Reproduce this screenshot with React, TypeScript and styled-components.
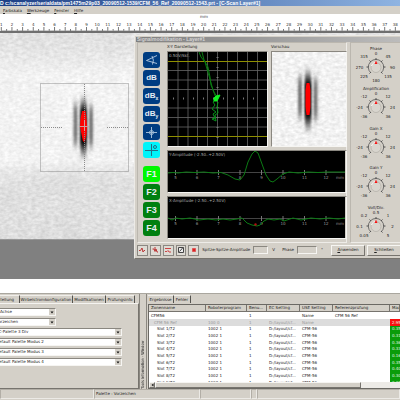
import React, { useEffect, useState } from "react";
import styled, { createGlobalStyle, css } from "styled-components";

const GlobalStyle = createGlobalStyle`
  *, *::before, *::after { box-sizing: border-box; }
  body { margin: 0; background: #d4d0c8; }
  body, button, input, select, table { font-family: "DejaVu Sans", "Noto Sans", sans-serif; font-size: 4px; line-height: 6px; color: #222; }
  button, input, select { margin: 0; padding: 0; border-radius: 0; }
  svg { display: block; }
`;

const sunken = css`
  border: 1px solid;
  border-color: #8a8780 #f6f5f2 #f6f5f2 #8a8780;
`;
const raised = css`
  border: 1px solid;
  border-color: #f6f5f2 #77746e #77746e #f6f5f2;
`;

const Page = styled.div`
  display: flex;
  flex-direction: column;
  min-height: 100vh;
  overflow: hidden;
  background: #d4d0c8;
`;
const TitleBar = styled.header`
  height: 6px;
  overflow: hidden;
  white-space: nowrap;
  color: #fff;
  font: bold 5px/6px "Liberation Sans", sans-serif;
  background: linear-gradient(90deg, #1c3f86, #8fb4e2);
`;
const MenuBar = styled.nav`
  display: flex;
  gap: 5px;
  height: 8px;
  padding: 1px 3px 0;
`;
const MenuItem = styled.button`
  border: 0;
  background: none;
  white-space: nowrap;
  &::first-letter { text-decoration: underline; }
`;
const RulerBar = styled.div`
  height: 19px;
  overflow: hidden;
  background: #fff;
  border-bottom: 2px solid #6f6f6f;
`;
const Workspace = styled.main`
  position: relative;
  flex: 1;
  min-height: 246px;
  overflow: hidden;
  background: #808080;
`;
const Dialog = styled.section`
  position: absolute;
  top: 2px;
  left: 134px;
  width: 270px;
  padding: 1px;
  background: #d4d0c8;
  border: 1px solid;
  border-color: #eceae6 #77746e #77746e #eceae6;
`;
const DialogTitle = styled.div`
  height: 5px;
  padding-left: 1px;
  overflow: hidden;
  font: bold 5px/5px "Liberation Sans", sans-serif;
  color: #d4d4d4;
  background: linear-gradient(90deg, #808080, #bcbcbc);
`;
const DialogBody = styled.div`
  display: flex;
  gap: 3px;
  padding: 0 1px;
`;
const Group = styled.div`
  display: flex;
  border: 1px solid;
  border-color: #bbb7af #eeece8 #eeece8 #bbb7af;
`;
const MainGroup = styled(Group)`
  width: 210px;
  padding: 1px 1px 3px 5px;
  gap: 7px;
`;
const KnobGroup = styled(Group)`
  flex: 1;
  flex-direction: column;
  justify-content: space-between;
  padding-top: 3px;
`;
const ToolColumn = styled.div`
  display: flex;
  flex-direction: column;
  gap: 2px;
  padding-top: 8px;
`;
const ToolButton = styled.button<{ $bg: string; $size?: number; $gap?: boolean }>`
  display: flex;
  align-items: center;
  justify-content: center;
  width: 17px;
  height: 16px;
  margin-top: ${(p) => (p.$gap ? 6 : 0)}px;
  border: 0;
  border-radius: 3px;
  background: ${(p) => p.$bg};
  color: #e6eef4;
  font: bold ${(p) => p.$size ?? 8}px/10px "Liberation Sans", sans-serif;
  sub { font-size: 5px; line-height: 5px; padding-top: 5px; }
`;
const Plots = styled.div`
  display: flex;
  flex: 1;
  flex-direction: column;
  gap: 3px;
`;
const PlotRow = styled.div`
  display: grid;
  grid-template-columns: 101px 1fr;
  gap: 3px;
`;
const Caption = styled.div`
  height: 7px;
`;
const Frame = styled.div`
  overflow: hidden;
  ${sunken}
`;
const Footer = styled.form`
  display: flex;
  align-items: center;
  gap: 2px;
  height: 14px;
  padding: 0 1px;
`;
const SmallButton = styled.button`
  display: flex;
  align-items: center;
  justify-content: center;
  width: 11px;
  height: 11px;
  background: #dedbd4;
  border: 1px solid #8b8882;
`;
const Field = styled.label`
  display: flex;
  align-items: center;
  gap: 3px;
  margin-left: 1px;
  white-space: nowrap;
`;
const ValueInput = styled.input<{ $w: number }>`
  width: ${(p) => p.$w}px;
  height: 8px;
  background: #d4d0c8;
  outline: 0;
  ${sunken}
`;
const Unit = styled.span<{ $w: number }>`
  width: ${(p) => p.$w}px;
  padding-left: 2px;
`;
const PushButton = styled.button`
  flex: none;
  width: 34px;
  height: 11px;
  background: #d4d0c8;
  ${raised}
  &::first-letter { text-decoration: underline; }
`;
const KnobBox = styled.div`
  display: flex;
  flex-direction: column;
  align-items: center;
  width: 50px;
  height: 37px;
  line-height: 5px;
`;
const Band = styled.div`
  height: 14px;
  background: #fff;
`;
const Bottom = styled.div`
  display: grid;
  grid-template-columns: 139px 8px minmax(0, 1fr);
  grid-template-rows: minmax(0, 1fr);
  height: 96px;
  border-top: 1px solid #aaa79f;
`;
const SettingsPane = styled.section`
  display: flex;
  flex-direction: column;
  margin-left: -14px;
  padding-top: 1px;
`;
const Tabs = styled.div`
  display: flex;
  height: 8px;
`;
const Tab = styled.button<{ $w: number }>`
  flex: none;
  width: ${(p) => p.$w}px;
  background: #d4d0c8;
  border: 0 solid #55534f;
  border-right-width: 1px;
  border-top: 1px solid #f0eeea;
  white-space: nowrap;
`;
const TabBody = styled.div`
  display: flex;
  flex: 1;
  flex-direction: column;
  align-items: flex-start;
  gap: 2px;
  padding: 4px 5px;
  border: 1px solid;
  border-color: #f4f3f0 #77746e #77746e #f4f3f0;
`;
const SelectBox = styled.label<{ $w: number }>`
  display: grid;
  grid-template-columns: 1fr 6px;
  width: ${(p) => p.$w}px;
  height: 8px;
  background: #fff;
  ${sunken}
`;
const NativeSelect = styled.select`
  width: 100%;
  height: 6px;
  padding-left: 3px;
  appearance: none;
  border: 0;
  background: #fff;
`;
const Arrow = styled.span`
  display: flex;
  align-items: center;
  justify-content: center;
  background: #d4d0c8;
`;
const Strip = styled.div`
  display: flex;
  justify-content: center;
  border-left: 1px solid #8a8780;
  border-right: 1px solid #8a8780;
`;
const StripText = styled.span`
  writing-mode: vertical-rl;
  transform: rotate(180deg);
  white-space: nowrap;
  font-family: "DejaVu Sans Condensed", "Noto Sans", sans-serif;
`;
const ResultsPane = styled.section`
  display: flex;
  flex-direction: column;
  padding: 1px 0 0 1px;
`;
const TableFrame = styled.div`
  display: flex;
  flex: 1;
  flex-direction: column;
  min-height: 0;
  margin-top: 1px;
  background: #fff;
  border: 1px solid #6b6964;
  border-right: 0;
`;
const TableClip = styled.div`
  flex: 1;
  min-height: 0;
  overflow: hidden;
`;
const Results = styled.table`
  width: 100%;
  table-layout: fixed;
  border-collapse: separate;
  border-spacing: 0;
  white-space: nowrap;
  th { height: 7px; padding: 0 2px; overflow: hidden; text-align: left; font-weight: normal; background: #d4d0c8; border-right: 1px solid #77746e; border-bottom: 1px solid #77746e; }
  td { height: 7px; padding: 0 2px; overflow: hidden; }
  tbody tr:nth-child(3n) td { height: 6px; }
`;
const Row = styled.tr<{ $muted: boolean }>`
  color: ${(p) => (p.$muted ? "#999" : "#222")};
  background: ${(p) => (p.$muted ? "#dcdcdc" : "#fff")};
`;
const Name = styled.span<{ $level: number }>`
  padding-left: ${(p) => p.$level * 3}px;
`;
const Max = styled.td<{ $bad: boolean }>`
  background: ${(p) => (p.$bad ? "#fa1010" : "#0a9c0a")};
  color: #e6f3e0;
`;
const ScrollBar = styled.div`
  display: flex;
  flex: none;
  height: 6px;
  background: #edebe7;
`;
const ScrollArrow = styled.button`
  display: flex;
  align-items: center;
  justify-content: center;
  width: 6px;
  background: #d4d0c8;
  ${raised}
`;
const ScrollThumb = styled.div`
  width: 82%;
  background: #d4d0c8;
  ${raised}
`;
const StatusBar = styled.footer`
  display: grid;
  grid-template-columns: 94px 106px 51px 6px 1fr;
  height: 11px;
  padding-bottom: 1px;
`;
const StatusCell = styled.div`
  padding-left: 1px;
  line-height: 8px;
  white-space: nowrap;
  border: 1px solid;
  border-color: #b2aea6 #eceae6 #eceae6 #b2aea6;
`;

function usePageWidth() {
  const [width, setWidth] = useState(() => document.documentElement.clientWidth);
  useEffect(() => {
    const update = () => setWidth(document.documentElement.clientWidth);
    window.addEventListener("resize", update);
    return () => window.removeEventListener("resize", update);
  }, []);
  return width;
}

function Ruler() {
  const width = usePageWidth();
  const step = 10.65;
  const count = Math.floor((width - 4) / step) + 1;
  const ticks = [];
  for (let n = 1; n <= count; n++) {
    const x = 1.3 + (n - 1) * step;
    ticks.push(
      <g key={n}>
        <text x={x} y={12} textAnchor="middle">{n}</text>
        <path d={`M${x} 13V17M${x + step / 2} 15V17`} stroke="#555" strokeWidth="0.8" />
        {[1, 2, 3, 4, 6, 7, 8, 9].map((k) => (
          <path key={k} d={`M${x + (k * step) / 10} 16V17`} stroke="#888" strokeWidth="0.5" />
        ))}
      </g>
    );
  }
  return (
    <svg width="100%" height="17" fontSize="4" fill="#333">
      <text x="200" y="4">mm</text>
      {ticks}
    </svg>
  );
}

function Grain({ id, w, h, light }: { id: string; w: number; h: number; light?: boolean }) {
  return (
    <>
      <defs>
        <filter id={`${id}f`} x="0" y="0" width="100%" height="100%" colorInterpolationFilters="sRGB">
          <feTurbulence type="fractalNoise" baseFrequency="0.22 0.35" numOctaves="2" seed="4" />
          <feColorMatrix values="0.2 0 0 0 0.84  0.2 0 0 0 0.84  0.2 0 0 0 0.84  0 0 0 0 1" />
        </filter>
        <filter id={`${id}c`} x="0" y="0" width="100%" height="100%">
          <feTurbulence type="fractalNoise" baseFrequency="0.05 0.025" numOctaves="2" seed="9" />
          <feColorMatrix values="0 0 0 0 0.6  0 0 0 0 0.6  0 0 0 0 0.6  1.5 0 0 0 -0.55" />
        </filter>
        <filter id={`${id}b`} x="-100%" y="-30%" width="300%" height="160%">
          <feGaussianBlur stdDeviation="1 5" />
        </filter>
        <filter id={`${id}s`} x="-100%" y="-30%" width="300%" height="160%">
          <feGaussianBlur stdDeviation="1 3" />
        </filter>
        <linearGradient id={`${id}g`} x2="0" y2="1">
          <stop offset="0" stopColor="#999" stopOpacity="0.15" />
          <stop offset="0.2" stopColor="#fff" stopOpacity="0.3" />
          <stop offset="0.62" stopColor="#fff" stopOpacity="0.3" />
          <stop offset="0.75" stopColor="#888" stopOpacity="0.14" />
          <stop offset="1" stopColor="#888" stopOpacity="0.16" />
        </linearGradient>
      </defs>
      <rect width={w} height={h} filter={`url(#${id}f)`} />
      {light ? (
        <rect width={w} height={h} fill="#fff" opacity="0.15" />
      ) : (
        <>
          <rect width={w} height={h} filter={`url(#${id}c)`} opacity="0.3" />
          <rect width={w} height={h} fill={`url(#${id}g)`} />
        </>
      )}
    </>
  );
}

function Echo({ id, x, y, core }: { id: string; x: number; y: number; core: string }) {
  return (
    <g transform={`translate(${x} ${y})`}>
      <g filter={`url(#${id}b)`} fill="#333">
        <rect x="-10" y="-22" width="4" height="40" opacity="0.65" />
        <rect x="5.500" y="-20" width="4" height="40" opacity="0.65" />
        <rect x="-3" y="-26" width="6" height="54" opacity="0.8" />
      </g>
      <rect x="-3" y="-18" width="6" height="37" fill="#000" filter={`url(#${id}s)`} />
      <path d={core} fill="#f00" />
    </g>
  );
}

function ScanImage() {
  return (
    <svg width="400" height="207">
      <Grain id="scan" w={400} h={207} />
      <Echo id="scan" x={83.5} y={93.5} core="M-1.500-15.500H2L3-9 3.500 0 3 8 1.500 15H-0.500L-2 8-3.500 0-3-8Z" />
      <g stroke="#8c8c8c" fill="none" strokeDasharray="1 1">
        <path d="M40.500 50.500H128.500V138.500H40.500ZM84.500 51V138M41 94.500H62M107 94.500H128" />
      </g>
      <path d="M84.500 87V98M79 93.500H89" stroke="#cf9c9c" />
      <path d="M0 206.500H400" stroke="#555" opacity="0.5" />
    </svg>
  );
}

const Black = styled.svg`
  background: #000;
`;

function XYPlot() {
  return (
    <Black width="99" height="94">
      <path d="M10 0V94M20 0V94M29.500 0V94M39.500 0V94M49.500 0V94M59.500 0V94M69.500 0V94M79.500 0V94M89.500 0V94M0 18.500H99M0 28H99M0 37.500H99M0 56H99M0 65.500H99M0 75H99" stroke="#666" strokeWidth="0.8" />
      <path d="M49.500 5V90M5 46.500H95" stroke="#777" strokeDasharray="1 9" strokeWidth="2" />
      <path d="M0 9.500H99M0 84.500H99" stroke="#8f8f00" />
      <path d="M31 0 33 5 37 10 39 17 41 24 43 31 45 38 48 46M34 0 36 8 40 15 42 25 43 33 46 40 49 45" stroke="#087c10" fill="none" />
      <path d="M48 47 45 50 47 53 44 57 48 60 45 62 47 66 44 67 48 69 47 63 50 61 49 55 50 50" stroke="#07931a" fill="none" />
      <path d="M46 46 48 44 52 43 50 47 49 49 46 49Z" fill="#10f020" stroke="#10f020" />
      <text x="1" y="5" fill="#aaa" fontSize="4">0.50V/Skt.</text>
    </Black>
  );
}

function Preview() {
  return (
    <svg width="74" height="94">
      <Grain id="prev" w={74} h={94} light />
      <Echo id="prev" x={36} y={47} core="M-1.500-16H1.500L2.500-9V8L1.500 16H-1.500L-2.500 8V-9Z" />
    </svg>
  );
}

function AmplitudePlot({ label, wave, mark }: { label: string; wave: string; mark?: boolean }) {
  return (
    <Black width="177" height="41" fontSize="4" fill="#999">
      <path d="M0 21.500H177" stroke="#555" strokeWidth="0.8" />
      {[5, 6, 7, 8, 9, 10, 11, 12].map((n, i) => (
        <g key={n}>
          <path d={`M${7.5 + i * 21.5} 19V24`} stroke="#777" />
          <text x={7.5 + i * 21.5} y="27.500" textAnchor="middle">{n}</text>
        </g>
      ))}
      <text x="168" y="27.500">mm</text>
      <path d={wave} fill="none" stroke="#0b7a14" />
      {mark && <circle cx="87.500" cy="27.500" r="1.200" fill="#b01010" />}
      <text x="1" y="5" fill="#aaa">{label}</text>
    </Black>
  );
}

function Knob({ label, marks, bottom }: { label: string; marks: string[]; bottom?: string }) {
  const spots = [[25, 4], [13, 6.5], [37, 6.5], [8.5, 17.5], [41.5, 17.5], [13, 27], [37, 27]];
  return (
    <KnobBox>
      <span>{label}</span>
      <svg width="50" height="32" fontSize="4" fill="#222" textAnchor="middle" role="img" aria-label={label}>
        {marks.map((m, i) => (
          <text key={i} x={spots[i][0]} y={spots[i][1]}>{m}</text>
        ))}
        {bottom && <text x="25" y="31">{bottom}</text>}
        <path d="M25 7V9M34.500 16H32M15.500 16H18M18.500 9.500 20 11M31.500 9.500 30 11M18.500 22.500 20 21M31.500 22.500 30 21" stroke="#555" />
        <path d="M20 22A7.700 7.700 0 1 1 30 22" fill="none" stroke="#555" strokeWidth="0.800" />
        <circle cx="25" cy="16.500" r="5" fill="#d8d5ce" stroke="#b5b1a9" strokeWidth="0.800" />
        <path d="M20.500 15A4.700 4.700 0 0 1 26 11.800" fill="none" stroke="#fff" />
        <path d="M25 9.500 26.500 13H23.500Z" fill="#f21616" />
      </svg>
    </KnobBox>
  );
}

const Down = () => (
  <svg width="4" height="3"><path d="M0.500 0.500H3.500L2 2.500Z" fill="#111" /></svg>
);

function Choice({ w, value }: { w: number; value: string }) {
  return (
    <SelectBox $w={w}>
      <NativeSelect aria-label={value} defaultValue={value}>
        <option>{value}</option>
      </NativeSelect>
      <Arrow><Down /></Arrow>
    </SelectBox>
  );
}

const gain = ["0", "-12", "12", "-24", "24", "-36", "36"];
const maxima = ["0.35", "0.31", "0.36", "0.33", "0.16", "0.35", "0.40", "0.30", "0.31"];
const rows = [
  ["CFM56", "", "1", "", "Name", "CFM 56 Ref", ""],
  ["CFM 56 Ref", "100 0", "1", "D:/layout/cf...", "Name", "", "2.95"],
  ...maxima.map((m, i) => [`Slot ${i + 1}/72`, "1002 1", "1", "D:/layout/cf...", "CFM-56", "", m]),
];

const footerIcons = [
  <path d="M1 4.500H2.500L4 2 5 6 6 4.500H7" stroke="#b33" fill="none" />,
  <path d="M1.500 3H3L4 5.500 5 3 6 6H7M4 1V4" stroke="#b33" fill="none" />,
  <path d="M1 2.500H7M1 5.500H3L4 4.500 5 6H7" stroke="#c44" fill="none" />,
  <path d="M1.500 1.500V6.500H6.500V1.500ZM2.500 5.500 6 1.500" stroke="#444" fill="#eee" />,
  <path d="M2.500 2.500H5.500V5.500H2.500Z" stroke="#d55" fill="#d22" />,
];

export default function App() {
  return (
    <Page>
      <GlobalStyle />
      <TitleBar>D c:/scanalyzer/serialdata/pm1475m29p03_20090512-1539/CFM_56_Ref_20090512-1543.prt - [C-Scan Layer#1]</TitleBar>
      <MenuBar>
        {["Farbskala", "Werkzeuge", "Fenster", "Hilfe"].map((m) => <MenuItem key={m}>{m}</MenuItem>)}
      </MenuBar>
      <RulerBar><Ruler /></RulerBar>
      <Workspace>
        <ScanImage />
        <Dialog>
          <DialogTitle>Signalmodifikation - Layer#1</DialogTitle>
          <DialogBody>
            <MainGroup>
              <ToolColumn>
                <ToolButton $bg="#003d82" aria-label="Phase">
                  <svg width="13" height="12" fill="none" stroke="#b7cbe2"><path d="M12 1.500 1.500 6.500 12 9.500M7 2Q9.500 6 7.500 10.500" strokeWidth="0.900" /></svg>
                </ToolButton>
                <ToolButton $bg="#003d82">dB</ToolButton>
                <ToolButton $bg="#003d82">dB<sub>x</sub></ToolButton>
                <ToolButton $bg="#003d82">dB<sub>y</sub></ToolButton>
                <ToolButton $bg="#003d82" aria-label="Center">
                  <svg width="13" height="13" fill="none" stroke="#9fbbd6"><path d="M6.500 1V12M1 6.500H12" /><circle cx="6.500" cy="6.500" r="2" /></svg>
                </ToolButton>
                <ToolButton $bg="#00f4fa" aria-label="Offset">
                  <svg width="15" height="15" fill="none" stroke="#246e86"><path d="M7.500 1V13M1 7.500H14" /><circle cx="11" cy="4" r="1.500" /></svg>
                </ToolButton>
                <ToolButton $bg="#00f800" $size={9} $gap>F1</ToolButton>
                <ToolButton $bg="#008010" $size={9}>F2</ToolButton>
                <ToolButton $bg="#008010" $size={9}>F3</ToolButton>
                <ToolButton $bg="#008010" $size={9}>F4</ToolButton>
              </ToolColumn>
              <Plots>
                <PlotRow>
                  <div><Caption>X-Y Darstellung</Caption><Frame><XYPlot /></Frame></div>
                  <div><Caption>Vorschau</Caption><Frame><Preview /></Frame></div>
                </PlotRow>
                <Frame>
                  <AmplitudePlot label="Y-Amplitude (-2.50..+2.50V)" wave="M0 22 5 21.500 10 22 18 21 27 21.500 36 21 45 22 53 21.500 60 24 67 28 72 29 76 24 80 11 84 3 87 0 90 2 94 13 98 24 102 30 105 31 109 28 115 23 121 21 130 22 140 21 150 21.500 160 21 177 21" />
                </Frame>
                <Frame>
                  <AmplitudePlot mark label="X-Amplitude (-2.50..+2.50V)" wave="M0 21 4 23 8 21 14 22 22 21 31 23 40 22 48 23 55 22 62 23 69 22 74 21 79 26 84 28 89 29 92 28 96 24 100 22 106 23 112 22 116 24 125 21 133 23 143 21 152 22 161 21 170 22 177 21" />
                </Frame>
              </Plots>
            </MainGroup>
            <KnobGroup>
              <Knob label="Phase" marks={["0", "315", "45", "270", "90", "225", "135"]} bottom="180" />
              <Knob label="Amplification" marks={gain} />
              <Knob label="Gain X" marks={gain} />
              <Knob label="Gain Y" marks={gain} />
              <Knob label="Volt/Div." marks={["0.5", "0.2", "1", "0.1", "2", "0.05", "5"]} />
            </KnobGroup>
          </DialogBody>
          <Footer onSubmit={(e) => e.preventDefault()}>
            {footerIcons.map((icon, i) => (
              <SmallButton key={i} type="button" aria-label={`Mode ${i + 1}`}><svg width="8" height="8">{icon}</svg></SmallButton>
            ))}
            <Field>Spitze-Spitze-Amplitude<ValueInput $w={15} /></Field>
            <Unit $w={9}>V</Unit>
            <Field>Phase<ValueInput $w={20} /></Field>
            <Unit $w={10}>°</Unit>
            <PushButton type="button">Anwenden</PushButton>
            <PushButton type="button">Schließen</PushButton>
          </Footer>
        </Dialog>
      </Workspace>
      <Band />
      <Bottom>
        <SettingsPane>
          <Tabs>
            <Tab $w={34}>Darstellung</Tab>
            <Tab $w={53}>Wirbelstromkonfiguration</Tab>
            <Tab $w={33}>Modifikationen</Tab>
            <Tab $w={29}>Prüfungsinfo</Tab>
          </Tabs>
          <TabBody>
            <Choice w={64} value="X-Achse" />
            <Choice w={64} value="Vorzeichen" />
            <Choice w={130} value="EC-Palette 3 Div" />
            <Choice w={130} value="Default Palette Modus 2" />
            <Choice w={130} value="Default Palette Modus 3" />
            <Choice w={130} value="Default Palette Modus 4" />
          </TabBody>
        </SettingsPane>
        <Strip><StripText>Tools Information - Window</StripText></Strip>
        <ResultsPane>
          <Tabs>
            <Tab $w={26}>Ergebnisse</Tab>
            <Tab $w={17}>Fehler</Tab>
          </Tabs>
          <TableFrame>
            <TableClip>
              <Results>
                <colgroup>
                  {[57, 41, 20, 33, 33, 57].map((w, i) => <col key={i} width={w} />)}
                  <col />
                </colgroup>
                <thead>
                  <tr>{["Zonenname", "Roboterprogram", "Benu...", "EC Setting", "USE Setting", "Referenzprüfung", "Max"].map((h) => <th key={h}>{h}</th>)}</tr>
                </thead>
                <tbody>
                  {rows.map((r, i) => (
                    <Row key={r[0]} $muted={i === 1}>
                      <td><Name $level={Math.min(i, 2)}>{r[0]}</Name></td>
                      {r.slice(1, 6).map((c, k) => <td key={k}>{c}</td>)}
                      {i === 0 ? <td /> : <Max $bad={i === 1}>{r[6]}</Max>}
                    </Row>
                  ))}
                </tbody>
              </Results>
            </TableClip>
            <ScrollBar>
              <ScrollArrow aria-label="Scroll left"><svg width="3" height="4"><path d="M2.500 0.500V3.500L0.500 2Z" fill="#111" /></svg></ScrollArrow>
              <ScrollThumb />
            </ScrollBar>
          </TableFrame>
        </ResultsPane>
      </Bottom>
      <StatusBar>
        <StatusCell />
        <StatusCell>Palette : Vorzeichen</StatusCell>
        <StatusCell />
        <StatusCell />
        <StatusCell />
      </StatusBar>
    </Page>
  );
}
